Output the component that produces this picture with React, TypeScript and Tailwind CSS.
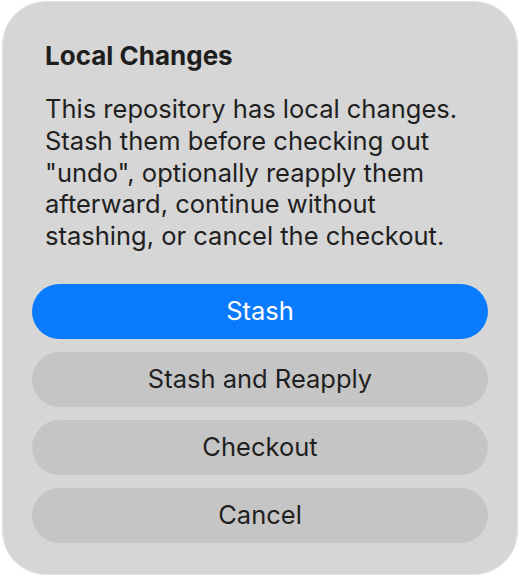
import React from "react";

const BUTTONS = ["Stash and Reapply", "Checkout", "Cancel"];

export default function App() {
  return (
    <div
      className="w-[520px] h-[576px] bg-white pt-px px-[2px]"
      style={{ fontFamily: "Inter, 'Noto Sans', sans-serif" }}
    >
      <div className="w-[516px] h-[574px] rounded-[44px] bg-[#d6d6d6] border border-[#e2e2e2] flex flex-col">
        {/* Header */}
        <div className="pt-[39px] px-[42px]">
          <h2 className="text-[26px] leading-[30px] font-bold text-[#1e1e1e] whitespace-nowrap">
            Local Changes
          </h2>
          <p className="mt-[22px] text-[25.5px] leading-[31.75px] text-[#1f1f1f] whitespace-nowrap">
            This repository has local changes.
            <br />
            Stash them before checking out
            <br />
            "undo", optionally reapply them
            <br />
            afterward, continue without
            <br />
            stashing, or cancel the checkout.
          </p>
        </div>

        {/* Actions */}
        <div className="mt-[32px] px-[29px] flex flex-col gap-[13px]">
          <button className="h-[55px] w-full rounded-full bg-[#0a7aff] text-white text-[25.5px] flex items-center justify-center">
            Stash
          </button>
          {BUTTONS.map((label) => (
            <button
              key={label}
              className="h-[55px] w-full rounded-full bg-[#c5c5c5] text-[#1f1f1f] text-[25.5px] flex items-center justify-center"
            >
              {label}
            </button>
          ))}
        </div>
      </div>
    </div>
  );
}
